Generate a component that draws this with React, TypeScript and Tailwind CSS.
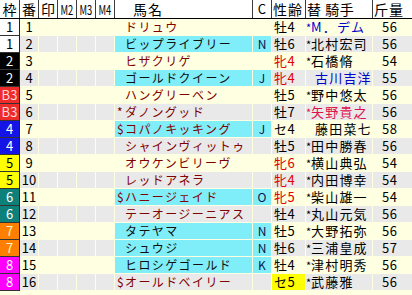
import React from "react";

type Row = {
  waku: number;
  no: number;
  pre: string;
  name: string;
  cyan?: boolean;
  dark?: boolean;
  c?: string;
  sex: string;
  mare?: boolean;
  sexBg?: boolean;
  jpre: string;
  jockey: string;
  jColor?: "blue" | "red";
  kin: string;
};

const rows: Row[] = [
  { waku: 1, no: 1, pre: "", name: "ドリュウ", sex: "牡4", jpre: "*", jockey: "M．デム", jColor: "blue", kin: "56" },
  { waku: 1, no: 2, pre: "", name: "ビップライブリー", cyan: true, dark: true, c: "N", sex: "牡6", jpre: "*", jockey: "北村宏司", kin: "56" },
  { waku: 2, no: 3, pre: "", name: "ヒザクリゲ", sex: "牝4", mare: true, jpre: "*", jockey: "石橋脩", kin: "54" },
  { waku: 2, no: 4, pre: "", name: "ゴールドクイーン", cyan: true, dark: true, c: "J", sex: "牝4", mare: true, jpre: " ", jockey: "古川吉洋", jColor: "blue", kin: "55" },
  { waku: 3, no: 5, pre: "", name: "ハングリーベン", sex: "牡5", jpre: "*", jockey: "野中悠太", kin: "56" },
  { waku: 3, no: 6, pre: "*", name: "ダノングッド", sex: "牡7", jpre: "*", jockey: "矢野貴之", jColor: "red", kin: "56" },
  { waku: 4, no: 7, pre: "$", name: "コパノキッキング", cyan: true, c: "J", sex: "セ4", jpre: " ", jockey: "藤田菜七", kin: "58" },
  { waku: 4, no: 8, pre: "", name: "シャインヴィットゥ", sex: "牡5", jpre: "*", jockey: "田中勝春", kin: "56" },
  { waku: 5, no: 9, pre: "", name: "オウケンビリーヴ", sex: "牝6", mare: true, jpre: "*", jockey: "横山典弘", kin: "54" },
  { waku: 5, no: 10, pre: "", name: "レッドアネラ", sex: "牝4", mare: true, jpre: "*", jockey: "内田博幸", kin: "54" },
  { waku: 6, no: 11, pre: "$", name: "ハニージェイド", cyan: true, c: "O", sex: "牝5", mare: true, jpre: "*", jockey: "柴山雄一", kin: "54" },
  { waku: 6, no: 12, pre: "", name: "テーオージーニアス", sex: "牡4", jpre: "*", jockey: "丸山元気", kin: "56" },
  { waku: 7, no: 13, pre: "", name: "タテヤマ", cyan: true, dark: true, c: "N", sex: "牡5", jpre: "*", jockey: "大野拓弥", kin: "56" },
  { waku: 7, no: 14, pre: "", name: "シュウジ", cyan: true, dark: true, c: "N", sex: "牡6", jpre: "*", jockey: "三浦皇成", kin: "57" },
  { waku: 8, no: 15, pre: "", name: "ヒロシゲゴールド", cyan: true, dark: true, c: "K", sex: "牡4", jpre: "*", jockey: "津村明秀", kin: "56" },
  { waku: 8, no: 16, pre: "$", name: "オールドベイリー", sex: "セ5", sexBg: true, jpre: "*", jockey: "武藤雅", kin: "56" },
];

// 枠番ごとの色
const wakuStyle: Record<number, { cls: string; label: string }> = {
  1: { cls: "bg-white text-black", label: "1" },
  2: { cls: "bg-black text-white", label: "2" },
  3: { cls: "bg-[#ee2b2b] text-[#ffd6d6]", label: "B3" },
  4: { cls: "bg-[#1414e6] text-white", label: "4" },
  5: { cls: "bg-[#ffff00] text-black", label: "5" },
  6: { cls: "bg-[#0d8079] text-white", label: "6" },
  7: { cls: "bg-[#ff8000] text-[#fff3c8]", label: "7" },
  8: { cls: "bg-[#ff00ff] text-white", label: "8" },
};

const cols = "grid-cols-[18px_18px_18px_18px_18px_137px_18px_33px_66px_39px]";

function MarkHead({ label }: { label: string }) {
  return (
    <div className="overflow-hidden bg-white text-center">
      <span className="inline-block origin-center scale-x-[0.72] text-[13px]">{label}</span>
    </div>
  );
}

export default function App() {
  return (
    <div
      className="h-[295px] w-[412px] overflow-hidden bg-[#ffffe2] text-black"
      style={{ fontFamily: '"Noto Sans CJK JP", "Noto Sans", sans-serif' }}
    >
      {/* ヘッダー */}
      <div className="grid h-[19px] grid-cols-[19px_18px_18px_18px_18px_18px_137px_18px_33px_66px_39px] gap-x-px border-b border-black bg-[#3c3c3c] text-[14px] leading-[18px]">
        <div className="bg-white text-center">枠</div>
        <div className="bg-white text-center">番</div>
        <div className="bg-white text-center">印</div>
        <MarkHead label="M2" />
        <MarkHead label="M3" />
        <MarkHead label="M4" />
        <div className="bg-white pl-[18px] tracking-[1px]">馬名</div>
        <div className="bg-white text-center text-[13px]">C</div>
        <div className="bg-white pl-px tracking-[1px]">性齢</div>
        <div className="bg-white pl-px tracking-[0.5px]">替 騎手</div>
        <div className="bg-white pl-px tracking-[1px]">斤量</div>
      </div>

      <div className="flex">
        {/* 枠 */}
        <div className="flex w-[20px] flex-col gap-px border-r border-[#222] bg-[#333] pb-px">
          {rows.map((r) => (
            <div
              key={r.no}
              className={`h-4 text-center text-[13px] leading-4 ${wakuStyle[r.waku].cls}`}
            >
              {wakuStyle[r.waku].label}
            </div>
          ))}
        </div>

        <div className={`grid ${cols} auto-rows-[16px] gap-px pb-px`}>
          {rows.map((r) => {
            const even = r.no % 2 === 0;
            const base = even ? "bg-[#e9e9e9]" : "bg-[#ffffe2]";
            return (
              <React.Fragment key={r.no}>
                <div className={`${base} text-center text-[13px] leading-4`}>{r.no}</div>
                <div className={base} />
                <div className={base} />
                <div className={base} />
                <div className={base} />
                <div
                  className={`overflow-hidden whitespace-nowrap pl-[2px] text-[12px] leading-4 tracking-[1.4px] ${
                    r.cyan ? "bg-[#80eef8]" : base
                  } ${r.dark ? "text-[#101010]" : "text-[#800000]"}`}
                >
                  <span className="inline-block w-[8px] tracking-normal">{r.pre}</span>
                  {r.name}
                </div>
                <div
                  className={`text-center text-[12px] leading-4 text-[#0c1450] ${
                    r.c ? "bg-[#80eef8]" : base
                  }`}
                >
                  {r.c}
                </div>
                <div
                  className={`pl-[2px] text-[13px] leading-4 tracking-[0.5px] ${
                    r.sexBg ? "bg-[#ffff00]" : base
                  } ${r.mare ? "text-[#e00000]" : "text-black"}`}
                >
                  {r.sex}
                </div>
                <div
                  className={`whitespace-nowrap text-[13px] leading-4 tracking-[1.2px] ${base} ${
                    r.jColor === "blue"
                      ? "text-[#0000c8]"
                      : r.jColor === "red"
                        ? "text-[#e0104c]"
                        : "text-black"
                  }`}
                >
                  <span className={`inline-block text-[11px] tracking-normal ${r.jpre === "*" ? "w-[5px]" : "w-[9px]"}`}>
                    {r.jpre === "*" ? "*" : ""}
                  </span>
                  {r.jockey}
                </div>
                <div className={`${base} pl-[9px] text-[13px] leading-4 tracking-[0.5px]`}>{r.kin}</div>
              </React.Fragment>
            );
          })}
        </div>
      </div>
    </div>
  );
}
